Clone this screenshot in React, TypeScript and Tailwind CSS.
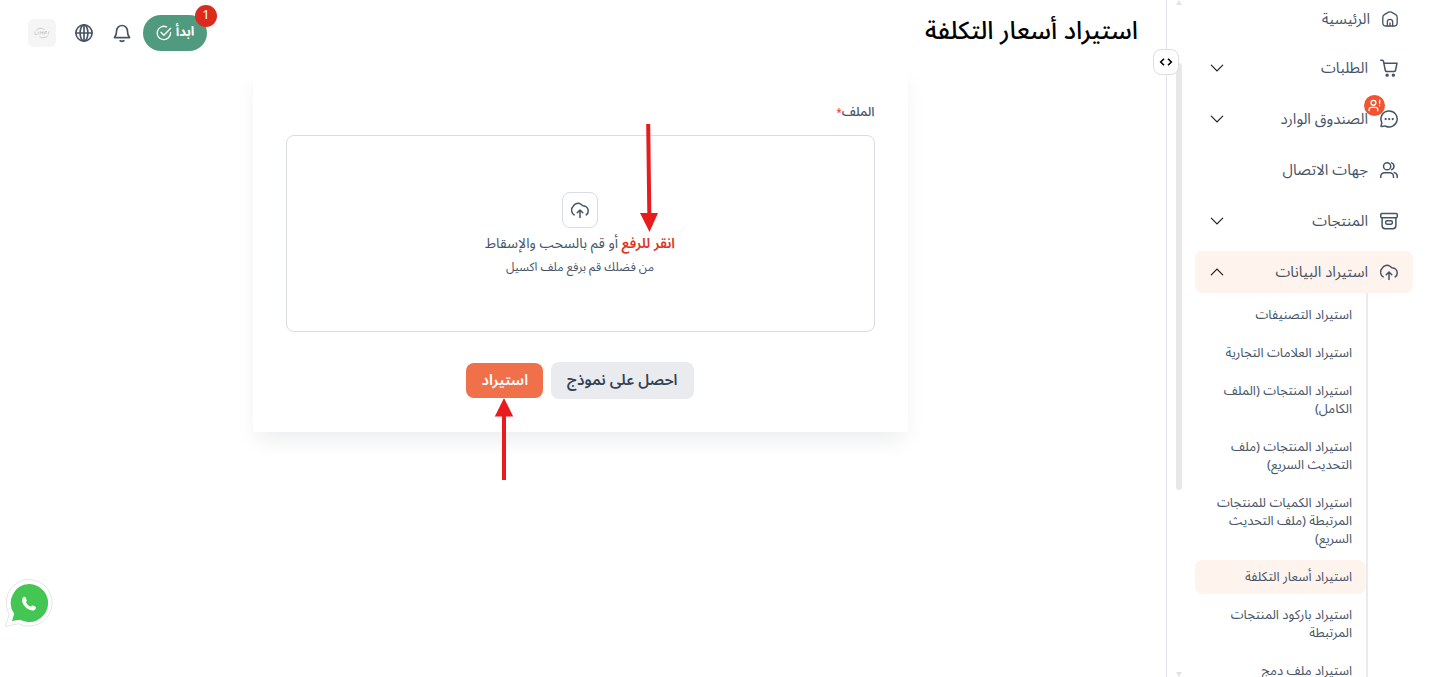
import type { ReactNode } from "react";
import clsx from "clsx";

const iconProps = {
  viewBox: "0 0 24 24",
  fill: "none",
  stroke: "currentColor",
  strokeWidth: 2,
  strokeLinecap: "round" as const,
  strokeLinejoin: "round" as const,
};

const HomeIcon = () => (
  <svg {...iconProps} className="size-4">
    <path d="M10 1.800a4.200 4.200 0 0 1 4 0l6 3.300A5.500 5.500 0 0 1 22.800 10v7.500a5 5 0 0 1-5 5H6.200a5 5 0 0 1-5-5V10A5.500 5.500 0 0 1 4 5.100z" />
    <path d="M8 22.500V16.500a4 4 0 0 1 8 0v6M12 18v4.500" />
  </svg>
);

const CartIcon = () => (
  <svg {...iconProps} className="size-[18px]">
    <path d="M1 1.800h2.200c.8 0 1.300.5 1.400 1.200l.5 2.500L7 15a2.200 2.200 0 0 0 2.200 1.800h9.300a2.200 2.200 0 0 0 2.200-1.800L22.700 5.500H5" />
    <circle cx="9.500" cy="21.500" r="1.300" fill="currentColor" />
    <circle cx="17.800" cy="21.500" r="1.300" fill="currentColor" />
  </svg>
);

const ChatIcon = () => (
  <svg {...iconProps} className="size-[18px]">
    <path d="M12.200 1.200a10.700 10.700 0 1 1-4.500 20.400c-.5-.2-.9-.3-1.400-.2l-4.200.6c-.7.1-1-.3-.8-.9l1-3.300c.2-.6.1-1-.1-1.500A10.700 10.700 0 0 1 12.200 1.200z" />
    <path d="M7.500 12h.1M12.200 12h.1M16.900 12h.1" strokeWidth="3" />
  </svg>
);

const UsersIcon = () => (
  <svg {...iconProps} className="size-[18px]">
    <circle cx="9.500" cy="7" r="4.800" />
    <path d="M1 22v-1.500a5 5 0 0 1 5-5h7a5 5 0 0 1 5 5V22M15.500 2.500a4.800 4.800 0 0 1 0 9M19 15.500a5 5 0 0 1 4 5V22" />
  </svg>
);

const ArchiveIcon = () => (
  <svg {...iconProps} className="size-[18px]">
    <rect x="1" y="2" width="22" height="5.500" rx="1.300" />
    <path d="M2.800 7.500V18a4.200 4.200 0 0 0 4.200 4.200h10a4.200 4.200 0 0 0 4.200-4.200V7.500" />
    <rect x="7.500" y="11.800" width="9" height="4.400" rx="1.800" />
  </svg>
);

const UploadIcon = () => (
  <svg {...iconProps} className="size-[18px]">
    <path d="M4.200 18.600A7.500 7.500 0 0 1 3 6.900C5.200 3 10 1.800 13.300 4.300c1 .8 1.500 1.700 2.700 2 4 .3 7 3.200 7 7 0 2.300-1 4-2.700 5.200" />
    <path d="M12 22v-9.500M8.300 15.700l3.700-3.700 3.700 3.700" />
  </svg>
);

const Chevron = ({ up = false }: { up?: boolean }) => (
  <svg viewBox="0 0 14 8" fill="none" stroke="#1f1f1f" strokeWidth="1.2" strokeLinecap="round" className={clsx("w-3.5 h-2", up && "rotate-180")}>
    <path d="M1.300 1.200L7 6.900l5.700-5.700" />
  </svg>
);

const BellIcon = () => (
  <svg {...iconProps} className="size-5">
    <path d="M5.500 9.500a6.500 6.500 0 0 1 13 0c0 4.500 1.300 6.300 2.500 8H3c1.200-1.700 2.500-3.500 2.500-8zM9.800 21.300c1.300.9 3.100.9 4.400 0" />
  </svg>
);

const GlobeIcon = () => (
  <svg {...iconProps} className="size-5">
    <circle cx="12" cy="12" r="9.700" />
    <ellipse cx="12" cy="12" rx="4.700" ry="9.700" />
    <path d="M2.300 12h19.400M12 2.300v19.400" />
  </svg>
);

const CheckIcon = () => (
  <svg {...iconProps} className="size-4">
    <path d="M21.800 11.500A10 10 0 1 1 15.800 2.800" />
    <path d="M7.500 11l4.300 4.300L22 5" />
  </svg>
);

const WhatsAppIcon = () => (
  <svg viewBox="0 0 48 48" className="size-12">
    <path d="M24 .5a23.300 23.300 0 1 1-10.500 44.200L.5 47.500l3.700-12.300A23.300 23.300 0 0 1 24 .5z" fill="#fff" stroke="#dfe7e8" />
    <path d="M24 5a19 19 0 1 1-9 35.700L7 42l2.200-7.200A19 19 0 0 1 24 5z" fill="#43c653" />
    <path d="M18.300 18.200c1-.7 2-.4 2.400.5l1 2.200c.3.800 0 1.300-.8 2.100 1 2.300 2.700 3.900 4.800 4.800.7-1.100 1.400-1.500 2.200-1.200l2.200 1c1 .5 1 1.400.4 2.300-1.100 1.600-3 1.900-5.300 1.100-4-1.400-6.900-4.500-7.900-8-.5-2 0-3.900 1-4.800z" fill="#fff" />
  </svg>
);

type MenuItem = {
  label: string;
  icon: ReactNode;
  expandable?: boolean;
  alert?: boolean;
  open?: boolean;
};

const menu: MenuItem[] = [
  { label: "الطلبات", icon: <CartIcon />, expandable: true },
  { label: "الصندوق الوارد", icon: <ChatIcon />, expandable: true, alert: true },
  { label: "جهات الاتصال", icon: <UsersIcon /> },
  { label: "المنتجات", icon: <ArchiveIcon />, expandable: true },
  { label: "استيراد البيانات", icon: <UploadIcon />, expandable: true, open: true },
];

const importLinks = [
  "استيراد التصنيفات",
  "استيراد العلامات التجارية",
  "استيراد المنتجات (الملف\nالكامل)",
  "استيراد المنتجات (ملف\nالتحديث السريع)",
  "استيراد الكميات للمنتجات\nالمرتبطة (ملف التحديث\nالسريع)",
  "استيراد أسعار التكلفة",
  "استيراد باركود المنتجات\nالمرتبطة",
  "استيراد ملف دمج",
];

const activeLink = "استيراد أسعار التكلفة";

function MenuRow({ item }: { item: MenuItem }) {
  const content = (
    <>
      <span className="relative">
        {item.icon}
        {item.alert && (
          <span className="absolute -top-[15px] -left-4 flex size-[21px] items-center justify-center rounded-full bg-[#f05430] text-white">
            <svg {...iconProps} strokeWidth={2.5} className="size-[13px]">
              <circle cx="10" cy="7" r="4.500" />
              <path d="M2 21.500v-2a4 4 0 0 1 4-4h8a4 4 0 0 1 4 4v2M21.500 2v6M21.500 12v.2" />
            </svg>
          </span>
        )}
      </span>
      <span>{item.label}</span>
      {item.expandable && (
        <span className="ms-auto">
          <Chevron up={item.open} />
        </span>
      )}
    </>
  );
  const classes = clsx(
    "flex h-[42px] w-full items-center gap-3 rounded-lg px-[15px] text-[15px] whitespace-nowrap",
    item.open && "bg-[#fef3ed]"
  );

  return item.expandable ? (
    <button type="button" aria-expanded={!!item.open} className={classes}>{content}</button>
  ) : (
    <a href="#" className={classes}>{content}</a>
  );
}

function Sidebar() {
  return (
    <aside className="relative flex w-[265px] shrink-0 border-e border-[#e1e2ec] ps-[18px] pe-[9px] text-[#475467]">
      <nav className="min-w-0 flex-1 overflow-hidden">
        <a href="#" className="flex h-[38px] items-center gap-3 px-[15px] text-[15px]">
          <HomeIcon />
          <span>الرئيسية</span>
        </a>
        <ul className="mt-[9px] flex flex-col gap-[9px]">
          {menu.map((item) => (
            <li key={item.label}>
              <MenuRow item={item} />
            </li>
          ))}
        </ul>
        <ul className="ms-[45px] flex flex-col gap-1 border-s-2 border-[#ebebeb] pt-[5px]">
          {importLinks.map((label) => (
            <li key={label}>
              <a
                href="#"
                className={clsx(
                  "block rounded-lg py-2 ps-3.5 text-[13px] leading-[18px] whitespace-pre",
                  label === activeLink && "bg-[#fef3ed]"
                )}
              >
                {label}
              </a>
            </li>
          ))}
        </ul>
      </nav>

      {/* Scroll track */}
      <div className="ms-[13px] flex w-1.5 flex-col items-center text-[#e3e3e3]">
        <svg viewBox="0 0 6 5" className="w-1.5 h-[5px]"><path d="M3 0l3 5H0z" fill="currentColor" /></svg>
        <div className="mt-[58px] h-[63%] w-full rounded-full bg-[#e8e8e8]" />
        <svg viewBox="0 0 6 5" className="mt-auto w-1.5 h-[5px]"><path d="M0 0h6L3 5z" fill="currentColor" /></svg>
      </div>

      <button type="button" aria-label="تبديل القائمة" className="absolute top-[49px] -left-3.5 flex size-[26px] items-center justify-center rounded-lg border border-[#dedede] bg-white text-black">
        <svg viewBox="0 0 14 8" fill="none" stroke="currentColor" strokeWidth="1.6" className="w-3.5 h-2">
          <path d="M5 .7L1.700 4 5 7.300M9 .7L12.300 4 9 7.300" />
        </svg>
      </button>
    </aside>
  );
}

function Header() {
  return (
    <header className="flex h-[66px] items-center justify-between px-7">
      <h1 className="pb-0.5 text-[25px] font-medium text-black">استيراد أسعار التكلفة</h1>
      <div className="flex items-center gap-[11px] text-[#475467]">
        <button type="button" className="relative flex h-9 w-16 items-center justify-center gap-1 rounded-full bg-[#509a7f] text-[13px] font-bold text-white">
          ابدأ
          <CheckIcon />
          <span className="absolute -top-2.5 -right-2.5 flex size-[22px] items-center justify-center rounded-full bg-[#db2b1f] text-[13px] font-normal">1</span>
        </button>
        <div className="flex items-center gap-[18px]">
          <button type="button" aria-label="الإشعارات"><BellIcon /></button>
          <button type="button" aria-label="اللغة"><GlobeIcon /></button>
          <button type="button" aria-label="الحساب" className="flex size-7 items-center justify-center rounded-md bg-[#f5f5f5]">
            <svg viewBox="0 0 16 12" className="w-4 h-3 text-[#c4c4c4]" fill="none" stroke="currentColor" strokeWidth="0.8">
              <path d="M2 3.500C4 .8 8 .6 10.500 2.600M14 8.500c-2 2.700-6 2.900-8.500.9" />
              <path d="M1 4.500v3h2M4.500 4.500l-.5 3M6 7.500l.5-3 1.500 2 1-2v3M10.500 7.500l.5-3h2M10.800 6h2M14 7.500l1-3" />
            </svg>
          </button>
        </div>
      </div>
    </header>
  );
}

function ImportCard() {
  return (
    <form className="relative mx-auto w-full max-w-[655px] bg-white px-[33px] pt-9 pb-[33px] text-[#475467] shadow-[0_12px_20px_-4px_#10182814]">
      <label htmlFor="file" className="block text-[13px] leading-5 font-medium">
        الملف<span className="text-[10px] leading-none text-[#f04438]">*</span>
      </label>
      <label htmlFor="file" className="mt-[13px] flex h-[197px] cursor-pointer flex-col items-center rounded-lg border border-[#d9dce3] pt-14">
        <input id="file" type="file" accept=".xlsx,.xls" className="sr-only" />
        <span className="flex size-9 items-center justify-center rounded-lg border border-[#dadce6]">
          <UploadIcon />
        </span>
        <span className="mt-1.5 text-sm leading-5">
          <span className="font-semibold text-[#e0331f]">انقر للرفع</span> أو قم بالسحب والإسقاط
        </span>
        <span className="mt-1 text-xs leading-5">من فضلك قم برفع ملف اكسيل</span>
      </label>
      <div className="mt-[30px] flex items-center justify-center gap-2 text-[15px] font-semibold">
        <button type="button" className="h-[37px] rounded-lg bg-[#eaebef] px-4 text-[#344054]">احصل على نموذج</button>
        <button type="submit" className="h-[35px] rounded-lg bg-[#f0704a] px-[15px] text-white">استيراد</button>
      </div>

      {/* Pointers to the two steps */}
      <svg viewBox="0 0 20 108" className="absolute top-[58px] left-[386px] h-[108px] w-5" fill="#e81c1c">
        <path d="M7.200 0h4l1.100 89h6.700L10.500 108 1 89h7.300z" />
      </svg>
      <svg viewBox="0 0 20 82" className="absolute -bottom-12 left-[241px] h-[82px] w-5" fill="#e81c1c">
        <path d="M10 0l9.200 18.500H12V82H8V18.500H.8z" />
      </svg>
    </form>
  );
}

export default function App() {
  return (
    <div dir="rtl" className="flex h-screen overflow-hidden bg-white font-['Noto_Sans_Arabic','DejaVu_Sans',sans-serif]">
      <Sidebar />
      <main className="min-w-0 flex-1">
        <Header />
        <section className="ps-7 pe-[22px]">
          <ImportCard />
        </section>
      </main>
      <a href="#" aria-label="WhatsApp" className="fixed bottom-[50px] left-[5px]">
        <WhatsAppIcon />
      </a>
    </div>
  );
}
